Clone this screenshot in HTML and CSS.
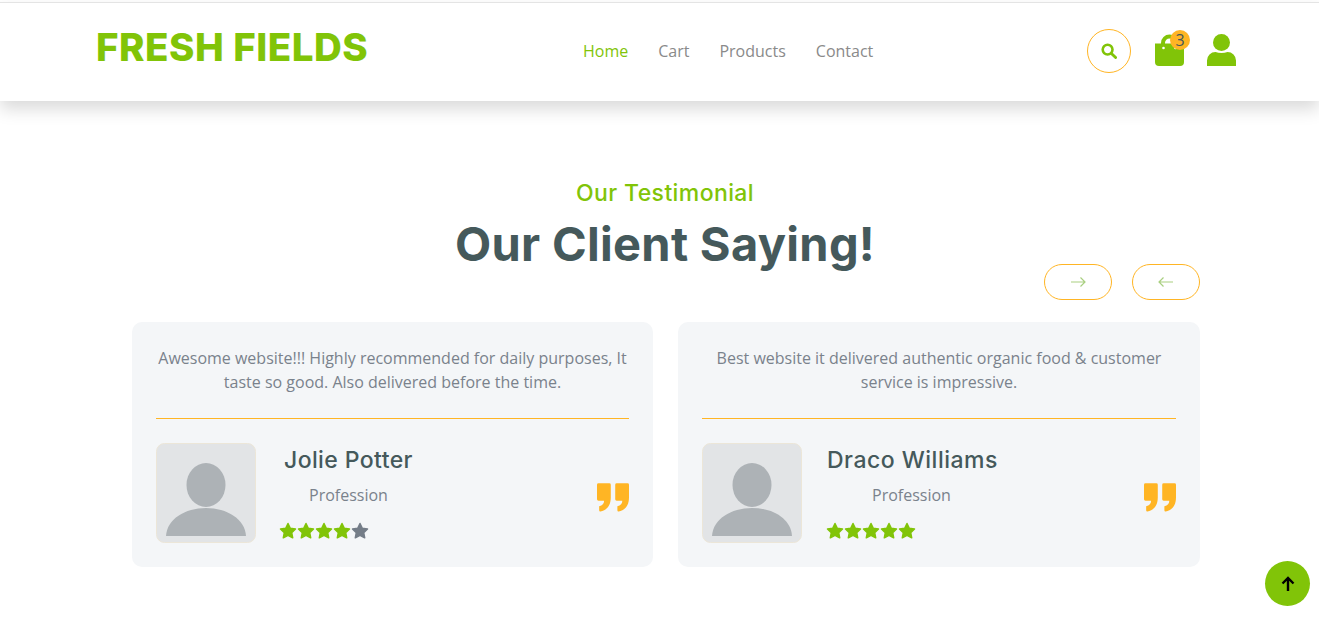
FILE: index.html
```html
<!DOCTYPE html>
<html lang="en">
<head>
<meta charset="utf-8">
<title>Fresh Fields</title>
<link rel="stylesheet" href="styles.css">
</head>
<body>
<header class="navbar">
  <a class="logo">FRESH FIELDS</a>
  <nav class="menu">
    <a class="menu-link active">Home</a>
    <a class="menu-link">Cart</a>
    <a class="menu-link">Products</a>
    <a class="menu-link">Contact</a>
  </nav>
  <div class="tools">
    <button class="search-btn" aria-label="Search">
      <svg width="16" height="16" viewBox="0 0 16 16"><circle cx="6.600" cy="6.600" r="4.900" fill="none" stroke="#81c408" stroke-width="2.600"/><path d="M10.400 10.400L14.600 14.600" stroke="#81c408" stroke-width="2.800" stroke-linecap="round"/></svg>
    </button>
    <div class="cart">
      <svg width="29" height="33" viewBox="0 0 29 33"><path d="M8 13V9a6.500 6.500 0 0 1 13 0V13" fill="none" stroke="#81c408" stroke-width="4"/><path d="M0 9.500H29V28a4 4 0 0 1-4 4H4a4 4 0 0 1-4-4Z" fill="#81c408"/><circle cx="8.500" cy="14" r="1.300" fill="#fff"/><circle cx="20.500" cy="14" r="1.300" fill="#fff"/></svg>
      <span class="badge">3</span>
    </div>
    <svg class="user" width="29" height="33" viewBox="0 0 29 33"><circle cx="14.500" cy="8.500" r="8.500" fill="#81c408"/><path d="M0 32V26.500a8.500 8.500 0 0 1 8.500-8.500c3.500 1.300 8.500 1.300 12 0a8.500 8.500 0 0 1 8.500 8.500v5.500Z" fill="#81c408"/></svg>
  </div>
</header>

<main class="testimonial">
  <div class="section-head">
    <h4 class="eyebrow">Our Testimonial</h4>
    <h1 class="title">Our Client Saying!</h1>
  </div>
  <div class="arrows">
    <button class="arrow" aria-label="Next"><svg width="16" height="12" viewBox="0 0 16 12"><path d="M1 6H15M10.500 1.500L15 6L10.500 10.500" fill="none" stroke="#a9cf80" stroke-width="1.200"/></svg></button>
    <button class="arrow" aria-label="Previous"><svg width="16" height="12" viewBox="0 0 16 12"><path d="M15 6H1M5.500 1.500L1 6L5.500 10.500" fill="none" stroke="#a9cf80" stroke-width="1.200"/></svg></button>
  </div>
  <div class="cards">
    <article class="card">
      <p class="quote">Awesome website!!! Highly recommended for daily purposes, It taste so good. Also delivered before the time.</p>
      <div class="divider"></div>
      <div class="person">
        <svg class="avatar" viewBox="0 0 100 100"><rect x=".5" y=".5" width="99" height="99" rx="8" fill="#e2e4e6" stroke="#ece6d8"/><ellipse cx="50" cy="42" rx="19.500" ry="22" fill="#adb2b6"/><path d="M10 93C11 76 29 65 50 65S89 76 90 93Z" fill="#adb2b6"/></svg>
        <div class="who">
          <h4 class="name name-a">Jolie Potter</h4>
          <p class="job job-a">Profession</p>
          <div class="stars stars-a">
            <svg class="star on" viewBox="0 0 18 18"><path d="M9 1.500L11.300 6.300L16.500 7L12.700 10.600L13.700 15.800L9 13.300L4.300 15.800L5.300 10.600L1.500 7L6.700 6.300Z"/></svg>
            <svg class="star on" viewBox="0 0 18 18"><path d="M9 1.500L11.300 6.300L16.500 7L12.700 10.600L13.700 15.800L9 13.300L4.300 15.800L5.300 10.600L1.500 7L6.700 6.300Z"/></svg>
            <svg class="star on" viewBox="0 0 18 18"><path d="M9 1.500L11.300 6.300L16.500 7L12.700 10.600L13.700 15.800L9 13.300L4.300 15.800L5.300 10.600L1.500 7L6.700 6.300Z"/></svg>
            <svg class="star on" viewBox="0 0 18 18"><path d="M9 1.500L11.300 6.300L16.500 7L12.700 10.600L13.700 15.800L9 13.300L4.300 15.800L5.300 10.600L1.500 7L6.700 6.300Z"/></svg>
            <svg class="star off" viewBox="0 0 18 18"><path d="M9 1.500L11.300 6.300L16.500 7L12.700 10.600L13.700 15.800L9 13.300L4.300 15.800L5.300 10.600L1.500 7L6.700 6.300Z"/></svg>
          </div>
        </div>
        <svg class="mark" width="32" height="29" viewBox="0 0 32.500 29"><path d="M1.500 0H12.500a1.500 1.500 0 0 1 1.500 1.500V14.500C14 23 9.500 27.800 3.500 28.600a1.200 1.200 0 0 1-1.300-1.200V23.300C5.500 22.800 7.200 20.500 7.200 17.800H1.500A1.500 1.500 0 0 1 0 16.300V1.500A1.500 1.500 0 0 1 1.500 0Z" fill="#ffb524"/><path d="M20 0H31a1.500 1.500 0 0 1 1.500 1.500V14.500C32.500 23 28 27.800 22 28.600a1.200 1.200 0 0 1-1.300-1.200V23.300C24 22.800 25.700 20.500 25.700 17.800H20A1.500 1.500 0 0 1 18.500 16.300V1.500A1.500 1.500 0 0 1 20 0Z" fill="#ffb524"/></svg>
      </div>
    </article>
    <article class="card">
      <p class="quote">Best website it delivered authentic organic food &amp; customer service is impressive.</p>
      <div class="divider"></div>
      <div class="person">
        <svg class="avatar" viewBox="0 0 100 100"><rect x=".5" y=".5" width="99" height="99" rx="8" fill="#e2e4e6" stroke="#ece6d8"/><ellipse cx="50" cy="42" rx="19.500" ry="22" fill="#adb2b6"/><path d="M10 93C11 76 29 65 50 65S89 76 90 93Z" fill="#adb2b6"/></svg>
        <div class="who">
          <h4 class="name name-b">Draco Williams</h4>
          <p class="job job-b">Profession</p>
          <div class="stars stars-b">
            <svg class="star on" viewBox="0 0 18 18"><path d="M9 1.500L11.300 6.300L16.500 7L12.700 10.600L13.700 15.800L9 13.300L4.300 15.800L5.300 10.600L1.500 7L6.700 6.300Z"/></svg>
            <svg class="star on" viewBox="0 0 18 18"><path d="M9 1.500L11.300 6.300L16.500 7L12.700 10.600L13.700 15.800L9 13.300L4.300 15.800L5.300 10.600L1.500 7L6.700 6.300Z"/></svg>
            <svg class="star on" viewBox="0 0 18 18"><path d="M9 1.500L11.300 6.300L16.500 7L12.700 10.600L13.700 15.800L9 13.300L4.300 15.800L5.300 10.600L1.500 7L6.700 6.300Z"/></svg>
            <svg class="star on" viewBox="0 0 18 18"><path d="M9 1.500L11.300 6.300L16.500 7L12.700 10.600L13.700 15.800L9 13.300L4.300 15.800L5.300 10.600L1.500 7L6.700 6.300Z"/></svg>
            <svg class="star on" viewBox="0 0 18 18"><path d="M9 1.500L11.300 6.300L16.500 7L12.700 10.600L13.700 15.800L9 13.300L4.300 15.800L5.300 10.600L1.500 7L6.700 6.300Z"/></svg>
          </div>
        </div>
        <svg class="mark" width="32" height="29" viewBox="0 0 32.500 29"><path d="M1.500 0H12.500a1.500 1.500 0 0 1 1.500 1.500V14.500C14 23 9.500 27.800 3.500 28.600a1.200 1.200 0 0 1-1.300-1.200V23.300C5.500 22.800 7.200 20.500 7.200 17.800H1.500A1.500 1.500 0 0 1 0 16.300V1.500A1.500 1.500 0 0 1 1.500 0Z" fill="#ffb524"/><path d="M20 0H31a1.500 1.500 0 0 1 1.500 1.500V14.500C32.500 23 28 27.800 22 28.600a1.200 1.200 0 0 1-1.300-1.200V23.300C24 22.800 25.700 20.500 25.700 17.800H20A1.500 1.500 0 0 1 18.500 16.300V1.500A1.500 1.500 0 0 1 20 0Z" fill="#ffb524"/></svg>
      </div>
    </article>
  </div>
</main>

<button class="to-top" aria-label="Back to top"><svg width="16" height="16" viewBox="0 0 16 16"><path d="M8 15V2M2.500 7.500L8 2L13.500 7.500" fill="none" stroke="#000" stroke-width="2.400"/></svg></button>
</body>
</html>
```

FILE: styles.css
```css
* { box-sizing: border-box; }
html, body { margin: 0; height: 622px; overflow: hidden; }
body { background: #fff; font-family: "Open Sans", sans-serif; font-size: 16px; color: #7a828c; padding-top: 2px; }
h1, h4, p { margin: 0; }
button { background: none; padding: 0; cursor: pointer; }

.navbar { height: 99px; background: #fff; border-top: 1px solid #e4e4e4; box-shadow: 0 8px 16px rgba(0,0,0,.15); display: flex; align-items: center; padding: 0 83px 2px 96px; position: relative; }
.logo { font-family: Inter, sans-serif; font-weight: 800; font-size: 38.500px; letter-spacing: .5px; line-height: 48px; color: #81c408; width: 487px; margin-top: -8px; }
.menu { display: flex; gap: 30px; line-height: 24px; }
.menu-link { color: #8a8a8a; }
.menu-link.active { color: #81c408; }
.tools { margin-left: auto; display: flex; align-items: center; }
.search-btn { width: 44px; height: 44px; border-radius: 50%; border: 1px solid #ffb524; display: flex; align-items: center; justify-content: center; margin-right: 24px; }
.cart { position: relative; width: 29px; height: 33px; margin: 0 23px 2px 0; }
.cart svg { display: block; }
.user { display: block; margin-bottom: 2px; }
.badge { position: absolute; left: 15px; top: -4px; width: 20px; height: 20px; border-radius: 50%; background: #ffb524; color: #45595b; font-size: 16px; line-height: 20px; text-align: center; }

.testimonial { width: 1068px; margin-left: 132px; padding-top: 78px; }
.section-head { text-align: center; width: 1066px; }
.eyebrow { font-family: Inter, sans-serif; font-weight: 500; font-size: 23px; letter-spacing: .4px; line-height: 29px; color: #81c408; }
.title { font-family: Inter, sans-serif; font-weight: 700; font-size: 47px; letter-spacing: .3px; line-height: 59px; color: #45595b; margin-top: 6px; }
.arrows { display: flex; justify-content: flex-end; gap: 20px; margin-top: -9px; }
.arrow { width: 68px; height: 36px; border: 1px solid #ffb524; border-radius: 18px; display: flex; align-items: center; justify-content: center; }

.cards { display: grid; grid-template-columns: 521px 522px; gap: 25px; margin-top: 22px; }
.card { height: 245px; background: #f4f6f8; border-radius: 10px; padding: 24px; }
.quote { text-align: center; line-height: 24px; height: 72px; }
.divider { height: 1px; background: #ffb524; }
.person { display: flex; align-items: flex-start; margin-top: 24px; }
.avatar { width: 100px; height: 100px; flex: none; }
.who { margin-left: 24px; flex: 1; }
.name { font-family: Inter, sans-serif; font-weight: 500; font-size: 23px; line-height: 32px; color: #45595b; margin-top: 1px; }
.name-a { margin-left: 4px; letter-spacing: .4px; }
.name-b { margin-left: 1px; letter-spacing: .5px; }
.job { line-height: 24px; margin-top: 7px; }
.job-a { margin-left: 29px; }
.job-b { margin-left: 46px; }
.stars { display: flex; margin-top: 15px; }
.stars-a { margin-left: -1px; }
.star { width: 18px; height: 18px; display: block; stroke-linejoin: round; stroke-width: 1.500; }
.on { fill: #81c408; stroke: #81c408; }
.off { fill: #747d88; stroke: #747d88; }
.mark { flex: none; margin-top: 40px; display: block; }

.to-top { position: absolute; left: 1265px; top: 561px; width: 45px; height: 45px; border-radius: 50%; border: 0; background: #81c408; display: flex; align-items: center; justify-content: center; }
```
